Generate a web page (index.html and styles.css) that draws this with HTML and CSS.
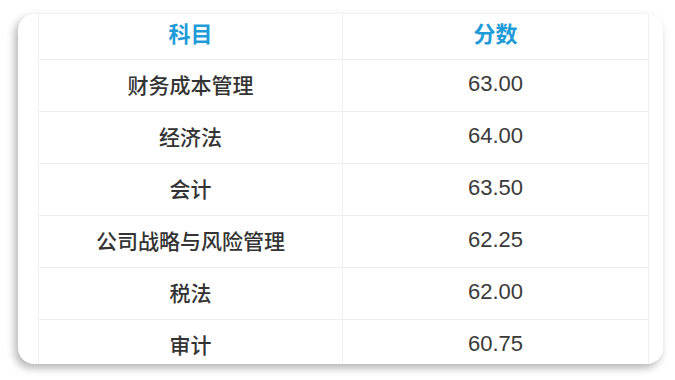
FILE: index.html
```html
<!DOCTYPE html>
<html lang="zh">
<head>
<meta charset="utf-8">
<link rel="stylesheet" href="styles.css">
</head>
<body>
<div class="card">
  <div class="grid">
    <div class="cell head">科目</div>
    <div class="cell head">分数</div>
    <div class="cell">财务成本管理</div>
    <div class="cell num">63.00</div>
    <div class="cell">经济法</div>
    <div class="cell num">64.00</div>
    <div class="cell">会计</div>
    <div class="cell num">63.50</div>
    <div class="cell">公司战略与风险管理</div>
    <div class="cell num">62.25</div>
    <div class="cell">税法</div>
    <div class="cell num">62.00</div>
    <div class="cell">审计</div>
    <div class="cell num">60.75</div>
  </div>
</div>
</body>
</html>
```
FILE: styles.css
```css
html, body {
  margin: 0;
  padding: 0;
  background: #ffffff;
}
body {
  width: 675px;
  height: 380px;
  overflow: hidden;
  font-family: "Liberation Sans", "Noto Sans CJK SC", sans-serif;
}
.card {
  margin: 14px 0 0 18px;
  width: 645px;
  height: 350px;
  background: #ffffff;
  border-radius: 16px;
  overflow: hidden;
  box-shadow: -3px 4px 9px rgba(0, 0, 0, 0.3);
}
.grid {
  margin: -6px 0 0 20px;
  width: 610px;
  display: grid;
  grid-template-columns: 304px 306px;
  border-right: 1px solid #f0f0f0;
}
.cell {
  box-sizing: border-box;
  height: 52px;
  padding-bottom: 3px;
  border-bottom: 1px solid #eeeeee;
  border-left: 1px solid #f0f0f0;
  display: flex;
  align-items: center;
  justify-content: center;
  font-size: 21px;
  font-weight: 500;
  color: #333333;
  font-family: "Noto Sans CJK SC", sans-serif;
}
.head {
  color: #1f9bd8;
  font-weight: 700;
  font-size: 22px;
}
.num {
  font-family: "Liberation Sans", "Noto Sans CJK SC", sans-serif;
  font-weight: 400;
  font-size: 22px;
  color: #3a3a3a;
}
```
